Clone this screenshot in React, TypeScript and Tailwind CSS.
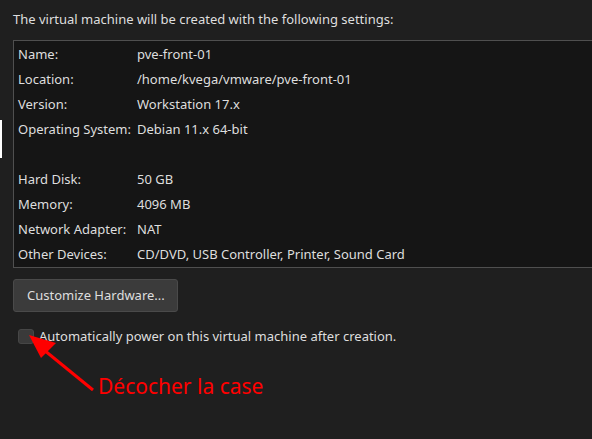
const rows: [string, string][] = [
  ["Name:", "pve-front-01"],
  ["Location:", "/home/kvega/vmware/pve-front-01"],
  ["Version:", "Workstation 17.x"],
  ["Operating System:", "Debian 11.x 64-bit"],
  ["", ""],
  ["Hard Disk:", "50 GB"],
  ["Memory:", "4096 MB"],
  ["Network Adapter:", "NAT"],
  ["Other Devices:", "CD/DVD, USB Controller, Printer, Sound Card"],
];

export default function App() {
  return (
    <div
      className="relative h-[439px] w-[592px] overflow-hidden bg-[#1f1f1f] text-[13px] text-[#dedede]"
      style={{ fontFamily: '"Noto Sans", "Open Sans", sans-serif' }}
    >
      <div className="pl-[13px] pt-[10px] leading-[18px]">
        The virtual machine will be created with the following settings:
      </div>

      <div className="ml-[13px] mt-[12px] -mr-[10px] border border-[#4f4f4f] bg-[#151515] pl-[4px] pt-[1px]">
        {rows.map(([label, value], i) => (
          <div key={i} className="flex h-[25px] items-center">
            <span className="w-[119px] shrink-0">{label}</span>
            <span>{value}</span>
          </div>
        ))}
      </div>

      <div className="px-[13px] pt-[11px]">
        <button className="flex h-[33px] w-[165px] items-center rounded-[3px] border border-[#4a4a4a] bg-[#3b3b3b] pl-[13px] text-[#dedede]">
          Customize Hardware...
        </button>
      </div>

      <label className="mt-[15px] flex items-center pl-[18px]">
        <span className="h-[15px] w-[16px] rounded-[3px] border border-[#464646] bg-[#3a3a3a]" />
        <span className="ml-[5px]">Automatically power on this virtual machine after creation.</span>
      </label>

      <div className="absolute left-0 top-[120px] h-[38px] w-[2px] bg-white" />

      <div className="absolute left-[98px] top-[372px] text-[21px] leading-[29px] text-[#ff0000]">
        Décocher la case
      </div>

      <svg className="absolute left-0 top-0" width="592" height="439" viewBox="0 0 592 439">
        <line x1="93" y1="390" x2="44" y2="350" stroke="#ff0000" strokeWidth="3" />
        <polygon points="29,335 56,343 41,358" fill="#ff0000" />
      </svg>
    </div>
  );
}
